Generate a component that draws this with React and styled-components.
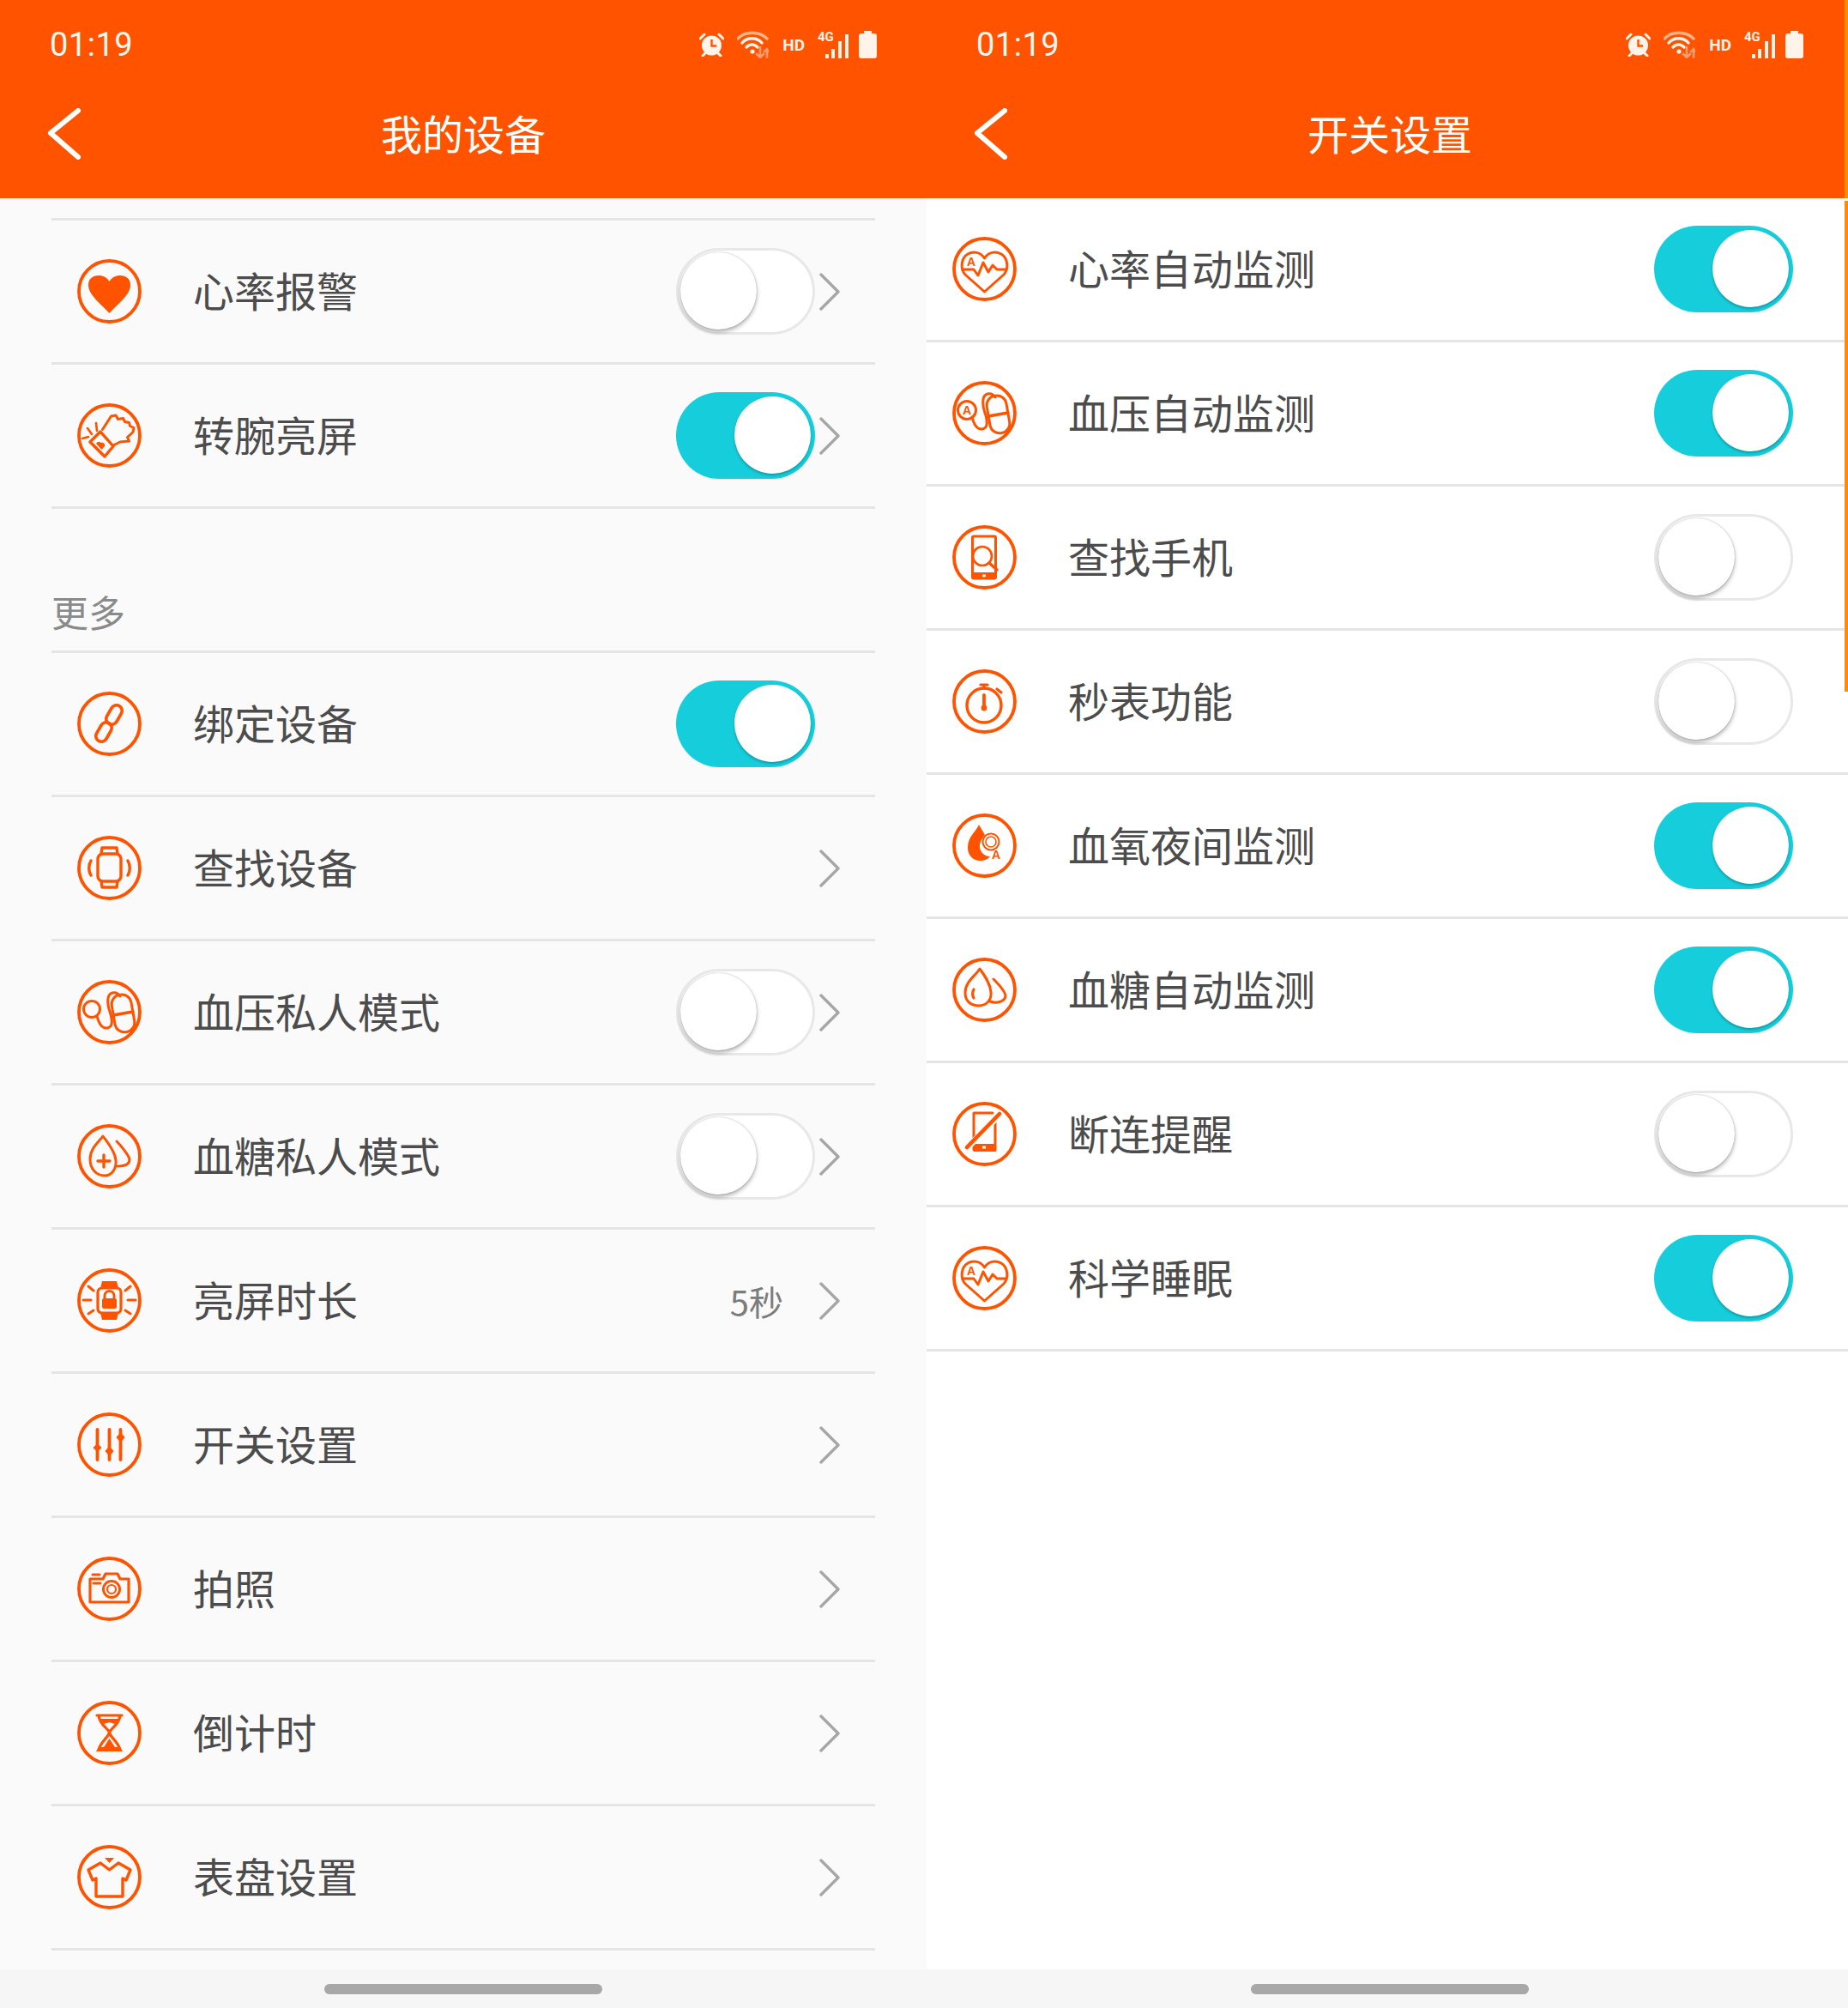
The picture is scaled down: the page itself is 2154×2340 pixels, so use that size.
import React from 'react';
import styled, { createGlobalStyle } from 'styled-components';

const GlobalStyle = createGlobalStyle`
  html, body { margin: 0; padding: 0; background: #f6f6f6; }
  body { font-family: "Noto Sans CJK SC", "Noto Sans", sans-serif; }
`;

const Page = styled.div`
  display: flex;
  width: 2154px;
  height: 2340px;
  overflow: hidden;
`;

const Screen = styled.div`
  position: relative;
  flex: 0 0 1080px;
  width: 1080px;
  height: 2340px;
  display: flex;
  flex-direction: column;
  background: ${p => p.$bg};
`;

const Header = styled.header`
  flex: 0 0 231px;
  display: flex;
  flex-direction: column;
  background: #ff5300;
  color: #fff;
`;

const StatusBar = styled.div`
  height: 104px;
  display: flex;
  align-items: center;
  padding: 0 58px 0 58px;
`;

const Time = styled.span`
  font-family: Roboto, sans-serif;
  font-size: 38px;
  letter-spacing: 0.5px;
  color: #fff6f0;
`;

const StatusIcons = styled.div`
  margin-left: auto;
  display: flex;
  align-items: center;
`;

const StatusGlyph = styled.svg`
  display: block;
  margin-left: ${p => p.$gap}px;
`;

const HdLabel = styled.span`
  margin-left: 16px;
  font-family: Roboto, sans-serif;
  font-weight: 700;
  font-size: 19px;
  line-height: 19px;
  color: #fff3ea;
`;

const NavBar = styled.div`
  height: 106px;
  display: grid;
  grid-template-columns: 1fr auto 1fr;
  align-items: center;
`;

const BackSvg = styled.svg`
  display: block;
  margin: 0 0 2px 55px;
`;

const Title = styled.h1`
  margin: 0 0 6px;
  font-size: 48px;
  font-weight: 400;
  line-height: 60px;
  color: #fff;
`;

const Content = styled.main`
  flex: 1;
  padding: ${p => p.$inset ? '23px 60px 0' : '0'};
`;

const List = styled.div`
  border-top: ${p => p.$topLine ? '3px solid #e5e5e5' : '0'};
`;

const Row = styled.div`
  box-sizing: border-box;
  height: 168px;
  display: flex;
  align-items: center;
  padding: 0 ${p => p.$right}px 0 30px;
  border-bottom: 3px solid #e5e5e5;
`;

const Label = styled.span`
  margin: 0 0 6px 60px;
  font-size: 48px;
  line-height: 60px;
  color: #4c4c4c;
`;

const Trailing = styled.div`
  margin-left: auto;
  display: flex;
  align-items: center;
  gap: 5px;
`;

const Value = styled.span`
  margin-right: 37px;
  font-size: 40px;
  color: #7c7c7c;
`;

const SectionTitle = styled.div`
  box-sizing: border-box;
  height: 168px;
  display: flex;
  align-items: flex-end;
  padding-bottom: 23px;
  font-size: 43px;
  line-height: 46px;
  color: #8a8a8a;
  border-bottom: 3px solid #e5e5e5;
`;

const Track = styled.div`
  position: relative;
  box-sizing: border-box;
  width: 162px;
  height: 101px;
  border-radius: 51px;
  background: ${p => p.$on ? '#16cedb' : '#fff'};
  border: ${p => p.$on ? '0' : '3px solid #e8e8e8'};
`;

const Knob = styled.div`
  position: absolute;
  top: ${p => p.$on ? 5 : 2}px;
  left: ${p => p.$on ? 68 : 2}px;
  width: 89px;
  height: 90px;
  border-radius: 50%;
  background: #fff;
  box-shadow: ${p => p.$on
    ? '0 2px 3px rgba(0, 90, 100, 0.45)'
    : '0 3px 5px rgba(0, 0, 0, 0.3), 0 0 2px rgba(0, 0, 0, 0.25)'};
`;

const ChevronSvg = styled.svg`
  display: block;
  visibility: ${p => p.$ghost ? 'hidden' : 'visible'};
`;

const RingIcon = styled.svg`
  flex: 0 0 75px;
  display: block;
  fill: none;
  stroke: #ff5300;
  stroke-width: 3;
  stroke-linecap: round;
  stroke-linejoin: round;
  .solid { fill: #ff5300; stroke: none; }
  .letter {
    fill: #ff5300;
    stroke: none;
    font-family: "Liberation Sans", sans-serif;
    font-weight: 700;
    font-size: 14px;
  }
`;

const HomeBar = styled.div`
  flex: 0 0 45px;
  display: flex;
  justify-content: center;
  padding-top: 17px;
  box-sizing: border-box;
  background: #f6f6f6;
`;

const HomePill = styled.div`
  width: 324px;
  height: 12px;
  border-radius: 6px;
  background: #a8a8a8;
`;

const EdgeBar = styled.div`
  position: absolute;
  left: 1070px;
  width: 4px;
  top: ${p => p.$top}px;
  height: ${p => p.$height}px;
  background: #ff8c00;
`;

const AHeart = () => (
  <>
    <path d="M37.5 64 L15 44 C9 37 10 25 18 20 C25 16 33 18 37.5 25 C42 18 50 16 57 20 C65 25 66 37 60 44 Z" />
    <path d="M12 38 H25 L30 45 L36 30 L42 41 L47 33 L52 38 H63" />
    <text className="letter" x="17" y="34">A</text>
  </>
);

const Pressure = ({ auto }) => (
  <>
    <circle cx="17" cy="34" r={auto ? 10.5 : 9.5} />
    {auto && <text className="letter" x="12" y="39">A</text>}
    <path d="M23 42 C25 50 29 57 35 56 C42 55 41 46 38 37 C35 28 34 17 41 15 C45 14 48 16 50 19" />
    <g transform="rotate(-10 53 39)">
      <rect x="42" y="17" width="23" height="44" rx="11" />
      <path d="M42 39 H65" strokeWidth="3.6" />
    </g>
  </>
);

// one drawing per feature, all inside the same ring
const glyphs = {
  heart: <path className="solid" d="M37.5 63 C28 52 13 42 13 30 C13 23 18 19 25 19 C30 19 35 21.5 37.5 26 C40 21.5 45 19 50 19 C57 19 62 23 62 30 C62 42 47 52 37.5 63Z" />,
  wrist: (
    <>
      <path d="M27 33 L15 45 L32 62 L42 50 Z" strokeWidth="3.4" />
      <path className="solid" d="M28.5 54 L22 47 C23.5 44.5 26 44 27.5 46 C30 45 33 47.5 32 50 Z" />
      <path d="M29.5 30.5 L39.5 15 L45 14 L47.5 18.5 L53.5 17.5 L55.5 21.5 L60.5 22.5 L61.5 26.5 L66 28.5 L65 33.5 L58.5 39.5 L60.5 44 L50 45 L42 49" />
      <path d="M6 41 L13 39 M12 29 L17 36 M22 23 L23 32" strokeWidth="2.6" />
    </>
  ),
  link: (
    <g strokeWidth="3.6">
      <rect x="31" y="20.5" width="24" height="13" rx="6.5" transform="rotate(-60 43 27)" />
      <rect x="19" y="40.5" width="24" height="13" rx="6.5" transform="rotate(-60 31 47)" />
    </g>
  ),
  watch: (
    <>
      <rect x="24" y="21" width="27" height="32" rx="6" strokeWidth="3.4" />
      <path d="M28 21 L29 14 H46 L47 21 M28 53 L29 60 H46 L47 53" strokeWidth="3.4" />
      <path d="M16 29 C13 34 13 41 16 46 M59 29 C62 34 62 41 59 46" strokeWidth="3.4" />
    </>
  ),
  pressure: <Pressure />,
  pressureAuto: <Pressure auto />,
  sugar: (
    <>
      <path d="M30 14 C25 21 15 28 15 41 C15 53 23 60 32 60 C41 60 46 51 45 42 C44 31 35 21 30 14Z" />
      <path d="M46 20 C50 24 60 36 61 41 C61 47 54 49 47 49" />
      <path d="M24 43 H38 M31 36 V50" strokeWidth="3.4" />
    </>
  ),
  lockWatch: (
    <>
      <rect x="24" y="23" width="27" height="29" rx="5" strokeWidth="3.2" />
      <path className="solid" d="M27 23 L29 15 H46 L48 23Z M27 52 L29 60 H46 L48 52Z" />
      <rect className="solid" x="29" y="35" width="17" height="12" rx="2" />
      <path d="M32 36 V32 a5.5 5.5 0 0 1 11 0 V36" />
      <path d="M7 37 H16 M59 37 H68 M13 21 L19 26 M62 21 L56 26 M13 53 L19 49 M62 53 L56 49" />
    </>
  ),
  sliders: (
    <>
      <path d="M23.5 20 V55 M37.5 20 V55 M50.5 20 V55" strokeWidth="3.8" />
      <path className="solid" d="M23.5 36 L28.5 41 L23.5 46 L18.5 41Z M37.5 39 L42.5 45 L37.5 51 L32.5 45Z M50.5 23 L55.5 29 L50.5 35 L45.5 29Z" />
    </>
  ),
  camera: (
    <>
      <path d="M15 53 V26 H30 L33 20 H47 L50 26 H60 V53 Z" strokeWidth="3.2" />
      <circle cx="40" cy="38" r="9.5" strokeWidth="3" />
      <circle cx="40" cy="38" r="5" strokeWidth="2.2" />
      <path d="M18 21 H26 M19 31 H27" strokeWidth="3" />
    </>
  ),
  timer: (
    <>
      <path d="M23 17 H52 M25 17 C26 28 36 32 37.5 37 C39 32 49 28 50 17" strokeWidth="3.2" />
      <path d="M37.5 37 C36 43 27 48 25 57 M37.5 37 C39 43 48 48 50 57" strokeWidth="3.2" />
      <path className="solid" d="M37.5 44 L44 54 H50 L53 59 H22 L25 54 H31 Z" />
      <path className="solid" d="M27 21 H48 L44 27 L37.5 25 L31 27 Z" />
    </>
  ),
  shirt: (
    <>
      <path d="M27 21 L13 29 L18 41 L22 39 V60 H53 V39 L57 41 L62 29 L48 21 L37.5 29 Z" strokeWidth="3.4" />
      <path className="solid" d="M32 15 L43 15 L37.5 21 Z" />
    </>
  ),
  heartAuto: <AHeart />,
  phoneSearch: (
    <>
      <rect x="23.5" y="13" width="27" height="49" rx="1.5" />
      <path className="solid" d="M23 55 H51 V63 H23 Z" />
      <rect x="35" y="57.5" width="4" height="2.8" fill="#fff" stroke="none" />
      <ellipse cx="35" cy="36" rx="11" ry="11" strokeWidth="2.6" />
      <path d="M43 44 L52 52" strokeWidth="3.4" />
    </>
  ),
  stopwatch: (
    <>
      <circle cx="37" cy="42" r="20" strokeWidth="3.4" />
      <path d="M33 18 H41 M37 18 V22 M52 23 L57 27" strokeWidth="3.2" />
      <path d="M37 30 V43" strokeWidth="3.8" />
      <circle className="solid" cx="37" cy="45" r="3.4" />
    </>
  ),
  oxygen: (
    <>
      <path className="solid" d="M31 13 C27 22 18 27 18 40 C18 50 26 56 34 55 C38 54.5 42 53 44 50 C37 50 31 44 32 36 C33 31 36 27 38 25 Z" />
      <circle cx="45" cy="33" r="9.5" strokeWidth="2" />
      <circle cx="45" cy="33" r="6" strokeWidth="1.6" />
      <text className="letter" x="46" y="53">A</text>
    </>
  ),
  drops: (
    <>
      <path d="M32 13 C27 21 15 28 15 41 C15 51 22 56 31 56 C40 56 46 49 45 40 C44 29 37 20 32 13Z" />
      <path d="M48 25 C52 29 62 39 62 45 C61 51 52 54 44 51" />
      <path d="M25 37 C23 41 23 44 25 47" strokeWidth="3.2" />
    </>
  ),
  phoneOff: (
    <>
      <path d="M47 13 H25 V56 H50 V24" />
      <path className="solid" d="M25 49 H51 V58 H25 Z" />
      <rect x="35" y="51.5" width="4" height="3" fill="#fff" stroke="none" />
      <path d="M56 14 L18 53" stroke="#fff" strokeWidth="7.5" />
      <path d="M55 14 L17 53" strokeWidth="4.6" />
    </>
  ),
};

const Glyph = ({ name }) => (
  <RingIcon width="75" height="75" viewBox="0 0 75 75">
    <circle cx="37.5" cy="37.5" r="35.5" strokeWidth="3.8" />
    {glyphs[name]}
  </RingIcon>
);

const Chevron = ({ ghost }) => (
  <ChevronSvg $ghost={ghost} width="24" height="44" viewBox="0 0 24 44" fill="none" stroke="#a6a6a6" strokeWidth="3.4" strokeLinecap="round" strokeLinejoin="round">
    <path d="M2 2 L22 22 L2 42" />
  </ChevronSvg>
);

const Toggle = ({ on }) => (
  <Track $on={on}>
    <Knob $on={on} />
  </Track>
);

const BackArrow = () => (
  <BackSvg width="40" height="60" viewBox="0 0 40 60" fill="none" stroke="#fff" strokeWidth="6" strokeLinecap="round" strokeLinejoin="round">
    <path d="M36 3 L4 29 L36 57" />
  </BackSvg>
);

const Status = () => (
  <StatusBar>
    <Time>01:19</Time>
    <StatusIcons>
      <StatusGlyph $gap={0} width="29" height="28" viewBox="0 0 29 28" fill="#fff3ea">
        <circle cx="14.5" cy="15" r="11.5" />
        <path d="M7 24 L4 27 M22 24 L25 27" stroke="#fff3ea" strokeWidth="3" strokeLinecap="round" />
        <path d="M1 7 L6 2 M28 7 L23 2" stroke="#fff3ea" strokeWidth="3" strokeLinecap="round" />
        <path d="M14.5 8 V15.5 H20" fill="none" stroke="#ff5300" strokeWidth="2.4" />
      </StatusGlyph>
      <StatusGlyph $gap={15} width="37" height="32" viewBox="0 0 37 32" fill="none" strokeLinecap="round">
        <path d="M1 9 C9 0 26 0 35 9" stroke="#ffb48c" strokeWidth="3.4" />
        <path d="M6 14 C12 7 23 7 29 14" stroke="#fff3ea" strokeWidth="3.4" />
        <path d="M11 19 C15 15 20 15 24 19" stroke="#fff3ea" strokeWidth="3.4" />
        <circle cx="18" cy="24" r="2.6" fill="#fff3ea" />
        <path d="M27 19 V31 M23 27 L27 31 L31 27 M35 31 V21 M32 24 L35 21 L37 24" stroke="#ff9c70" strokeWidth="2.6" />
      </StatusGlyph>
      <HdLabel>HD</HdLabel>
      <StatusGlyph $gap={15} width="37" height="40" viewBox="0 -4 37 40" fill="#fff3ea">
        <text x="0" y="12" fontFamily="Roboto, sans-serif" fontWeight="700" fontSize="15">4G</text>
        <rect x="9" y="27" width="4" height="5" />
        <rect x="16" y="21" width="4" height="11" />
        <rect x="24" y="12" width="4" height="20" />
        <rect x="32" y="4" width="4" height="28" />
      </StatusGlyph>
      <StatusGlyph $gap={11} width="21" height="32" viewBox="0 0 21 32" fill="#fff3ea">
        <path d="M6 0 H15 V3 H18 Q21 3 21 6 V29 Q21 32 18 32 H3 Q0 32 0 29 V6 Q0 3 3 3 H6 Z" />
      </StatusGlyph>
    </StatusIcons>
  </StatusBar>
);

const ScreenHeader = ({ title }) => (
  <Header>
    <Status />
    <NavBar>
      <BackArrow />
      <Title>{title}</Title>
    </NavBar>
  </Header>
);

const topRows = [
  { icon: 'heart', label: '心率报警', toggle: false, arrow: true },
  { icon: 'wrist', label: '转腕亮屏', toggle: true, arrow: true },
];

const moreRows = [
  { icon: 'link', label: '绑定设备', toggle: true },
  { icon: 'watch', label: '查找设备', arrow: true },
  { icon: 'pressure', label: '血压私人模式', toggle: false, arrow: true },
  { icon: 'sugar', label: '血糖私人模式', toggle: false, arrow: true },
  { icon: 'lockWatch', label: '亮屏时长', value: '5秒', arrow: true },
  { icon: 'sliders', label: '开关设置', arrow: true },
  { icon: 'camera', label: '拍照', arrow: true },
  { icon: 'timer', label: '倒计时', arrow: true },
  { icon: 'shirt', label: '表盘设置', arrow: true },
];

const switchRows = [
  { icon: 'heartAuto', label: '心率自动监测', toggle: true },
  { icon: 'pressureAuto', label: '血压自动监测', toggle: true },
  { icon: 'phoneSearch', label: '查找手机', toggle: false },
  { icon: 'stopwatch', label: '秒表功能', toggle: false },
  { icon: 'oxygen', label: '血氧夜间监测', toggle: true },
  { icon: 'drops', label: '血糖自动监测', toggle: true },
  { icon: 'phoneOff', label: '断连提醒', toggle: false },
  { icon: 'heartAuto', label: '科学睡眠', toggle: true },
];

const DeviceRow = ({ row }) => (
  <Row $right={41}>
    <Glyph name={row.icon} />
    <Label>{row.label}</Label>
    <Trailing>
      {row.value && <Value>{row.value}</Value>}
      {row.toggle !== undefined && <Toggle on={row.toggle} />}
      <Chevron ghost={!row.arrow} />
    </Trailing>
  </Row>
);

const SwitchRow = ({ row }) => (
  <Row $right={70}>
    <Glyph name={row.icon} />
    <Label>{row.label}</Label>
    <Trailing>
      <Toggle on={row.toggle} />
    </Trailing>
  </Row>
);

const App = () => (
  <Page>
    <GlobalStyle />
    <Screen $bg="#fafafa">
      <ScreenHeader title="我的设备" />
      <Content $inset>
        <List $topLine>
          {topRows.map(row => <DeviceRow key={row.label} row={row} />)}
        </List>
        <SectionTitle>更多</SectionTitle>
        <List>
          {moreRows.map(row => <DeviceRow key={row.label} row={row} />)}
        </List>
      </Content>
      <HomeBar><HomePill /></HomeBar>
    </Screen>
    <Screen $bg="#fff">
      <ScreenHeader title="开关设置" />
      <Content>
        <List>
          {switchRows.map((row, i) => <SwitchRow key={row.label + i} row={row} />)}
        </List>
      </Content>
      <HomeBar><HomePill /></HomeBar>
      <EdgeBar $top={0} $height={231} />
      <EdgeBar $top={234} $height={572} />
    </Screen>
  </Page>
);

export default App;
